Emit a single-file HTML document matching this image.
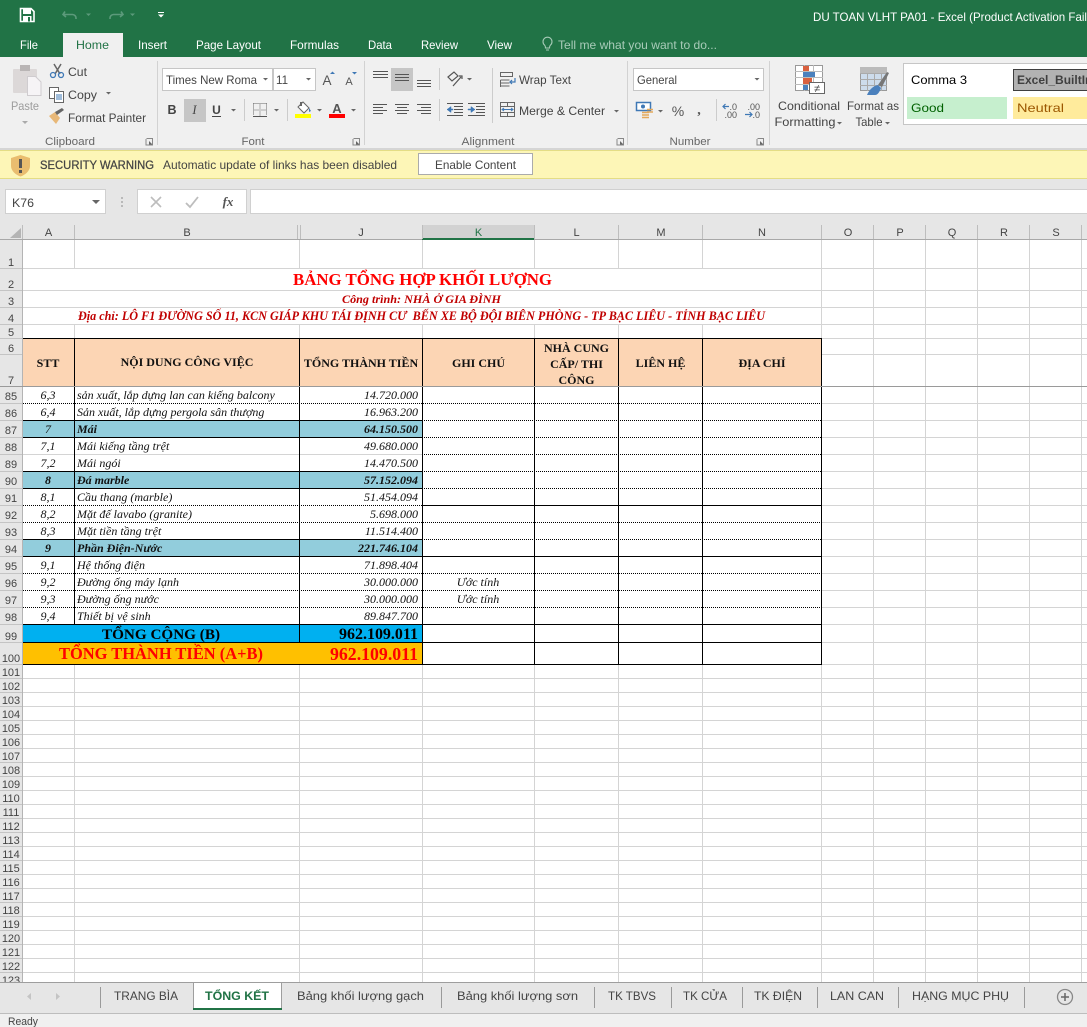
<!DOCTYPE html>
<html><head><meta charset="utf-8"><title>DU TOAN VLHT PA01 - Excel</title>
<style>
html,body{margin:0;padding:0;background:#fff;overflow:hidden}
svg{display:block;position:absolute;left:0;top:0}
text{font-family:"Liberation Sans",sans-serif;white-space:pre}
.u{font-size:12px;fill:#444}
.w{font-size:12px;fill:#fff}
.t{font-size:12px;fill:#fff}
.g{font-size:11px;fill:#666}
.rh{font-size:11px;fill:#444;text-anchor:middle}
.ch{font-size:11px;fill:#444;text-anchor:middle}
.s{font-family:"Liberation Serif",serif;font-size:12px;fill:#111}
.i{font-style:italic}
.b{font-weight:bold}
.c{text-anchor:middle}
.r{text-anchor:end}
.ln{stroke:#d4d4d4;fill:none}
.k{stroke:#000;fill:none}
.d{stroke:#000;fill:none;stroke-dasharray:1 1}
.ic{stroke:#555;fill:none}
.car{fill:#666}
</style></head><body>
<svg width="1087" height="1027" viewBox="0 0 1087 1027" shape-rendering="geometricPrecision">
<!-- backgrounds -->
<rect width="1087" height="1027" fill="#fff"/>
<rect width="1087" height="57" fill="#217346"/>
<rect y="57" width="1087" height="91" fill="#f0f0f0"/>
<rect y="148" width="1087" height="2" fill="#d5d5d5"/>
<rect y="150" width="1087" height="29" fill="#fdf6b7"/>
<rect y="150" width="1087" height="1" fill="#e4dd85"/>
<rect y="178" width="1087" height="1" fill="#e4dd85"/>
<rect y="179" width="1087" height="61" fill="#e6e6e6"/>

<!-- title bar -->
<g>
<path d="M20.500 8.500H31l3 3V21.500H20.500Z" fill="none" stroke="#fff" stroke-width="1.600"/>
<rect x="23" y="9" width="8" height="5" fill="#fff"/><rect x="23" y="16" width="8.500" height="5.500" fill="#fff"/><rect x="28" y="17" width="2" height="4.500" fill="#217346"/>
<path d="M65 11.500L63 14.500L66 17M63.500 14.500H72.500a3.500 3.500 0 0 1 3.500 3.500v1" fill="none" stroke="#5c9a7b" stroke-width="1.600"/>
<path d="M86 13.500h5l-2.500 2.500z" fill="#5c9a7b"/>
<path d="M121 11.500L123 14.500L120 17M122.500 14.500H113.500a3.500 3.500 0 0 0 -3.500 3.500v1" fill="none" stroke="#5c9a7b" stroke-width="1.600"/>
<path d="M130 13.500h5l-2.500 2.500z" fill="#5c9a7b"/>
<path d="M158 12h6v1h-6zM158 14.500h6l-3 3z" fill="#fff"/>
<text x="813" y="21" class="t" textLength="274" lengthAdjust="spacingAndGlyphs">DU TOAN VLHT PA01 - Excel (Product Activation Fail</text>
</g>
<!-- tabs -->
<rect x="63" y="33" width="60" height="24" fill="#f0f0f0"/>
<text x="20" y="49" class="w" textLength="18" lengthAdjust="spacingAndGlyphs">File</text>
<text x="76" y="49" class="u" style="fill:#217346" textLength="33" lengthAdjust="spacingAndGlyphs">Home</text>
<text x="138" y="49" class="w" textLength="29" lengthAdjust="spacingAndGlyphs">Insert</text>
<text x="196" y="49" class="w" textLength="65" lengthAdjust="spacingAndGlyphs">Page Layout</text>
<text x="290" y="49" class="w" textLength="49" lengthAdjust="spacingAndGlyphs">Formulas</text>
<text x="368" y="49" class="w" textLength="24" lengthAdjust="spacingAndGlyphs">Data</text>
<text x="421" y="49" class="w" textLength="37" lengthAdjust="spacingAndGlyphs">Review</text>
<text x="487" y="49" class="w" textLength="25" lengthAdjust="spacingAndGlyphs">View</text>
<path d="M544.500 45a4.500 4.500 0 1 1 6 0c-1 1-1 2-1 3h-4c0-1 0-2-1-3zM546 50h3" fill="none" stroke="#a8cbb8" stroke-width="1.100"/>
<text x="558" y="49" class="w" style="fill:#a8cbb8" textLength="159" lengthAdjust="spacingAndGlyphs">Tell me what you want to do...</text>

<!-- group separators -->
<g fill="#d2d2d2"><rect x="157" y="61" width="1" height="84"/><rect x="364" y="61" width="1" height="84"/><rect x="627" y="61" width="1" height="84"/><rect x="769" y="61" width="1" height="84"/></g>

<!-- clipboard -->
<g>
<rect x="13" y="69" width="24" height="24" rx="1" fill="#dcd8d8"/>
<rect x="20" y="65" width="10" height="6" fill="#b9b5b5"/>
<path d="M27.500 76.500h8l5.500 5.500v13.500h-13.500z" fill="#f6f4f6" stroke="#cfcccf"/>
<text x="25" y="110" class="c" style="font-size:12px;fill:#9c9c9c" textLength="28" lengthAdjust="spacingAndGlyphs">Paste</text>
<path d="M22 121h6l-3 3z" fill="#aaa"/>
<path d="M54 64l6 10M61 64l-6 10" stroke="#666" stroke-width="1.500" fill="none"/>
<circle cx="53" cy="75" r="2.500" fill="none" stroke="#3f78b5" stroke-width="1.300"/><circle cx="61" cy="75" r="2.500" fill="none" stroke="#3f78b5" stroke-width="1.300"/>
<text x="68" y="76" class="u" textLength="19" lengthAdjust="spacingAndGlyphs">Cut</text>
<rect x="49.500" y="87.500" width="9" height="11" fill="#fff" stroke="#666"/>
<rect x="54.500" y="91.500" width="9" height="11" fill="#fff" stroke="#666"/>
<path d="M56 95h6M56 97h6M56 99h6" stroke="#3f78b5"/>
<text x="68" y="99" class="u" textLength="29" lengthAdjust="spacingAndGlyphs">Copy</text>
<path d="M106 92h5l-2.500 2.500z" class="car"/>
<path d="M49 116l6-4 5 6-4 6z" fill="#e8b878"/>
<path d="M55 112l2 3 7-5-2-2z" fill="#666"/>
<text x="68" y="122" class="u" textLength="78" lengthAdjust="spacingAndGlyphs">Format Painter</text>
<text x="70" y="145" class="g c" textLength="50" lengthAdjust="spacingAndGlyphs">Clipboard</text>
<path d="M146.500 138.500h6v6M146 139v6h7" fill="none" stroke="#888"/><path d="M149 141l3.500 3.500h-3.500z" fill="#666"/>
</g>

<!-- font -->
<g>
<rect x="162.500" y="68.500" width="110" height="22" fill="#fff" stroke="#c6c6c6"/>
<rect x="273.500" y="68.500" width="42" height="22" fill="#fff" stroke="#c6c6c6"/>
<text x="166" y="84" class="u" textLength="91" lengthAdjust="spacingAndGlyphs">Times New Roma</text>
<path d="M263 78h5l-2.500 2.500z" class="car"/>
<text x="276" y="84" class="u" textLength="12" lengthAdjust="spacingAndGlyphs">11</text>
<path d="M306 78h5l-2.500 2.500z" class="car"/>
<text x="327" y="85" class="c" style="font-size:13.500px;fill:#555">A</text>
<path d="M330 74h5l-2.500-2.500z" fill="#3f78b5"/>
<text x="349" y="85" class="c" style="font-size:11px;fill:#555">A</text>
<path d="M352 72h5l-2.500 2.500z" fill="#3f78b5"/>
<rect x="184" y="99" width="22" height="23" fill="#c6c6c6"/>
<text x="172" y="114" class="c b" style="font-size:12.500px;fill:#444">B</text>
<text x="194.500" y="114" class="c i" style="font-size:12.500px;fill:#444;font-family:'Liberation Serif',serif">I</text>
<text x="216.500" y="114" class="c b" style="font-size:12px;fill:#444">U</text>
<rect x="212" y="116" width="9" height="1" fill="#444"/>
<path d="M231 109h5l-2.500 2.500z" class="car"/>
<rect x="244" y="99" width="1" height="22" fill="#ccc"/>
<path d="M253.500 103.500h13M253.500 110h13M260 103.500v12.500M253.500 103.500v12M266.500 103.500v12" fill="none" stroke="#666" stroke-dasharray="1 1"/>
<rect x="253" y="116" width="14" height="1" fill="#555"/>
<path d="M274 109h5l-2.500 2.500z" class="car"/>
<rect x="287" y="99" width="1" height="22" fill="#ccc"/>
<path d="M298 107l5-5 6 6-5 5z" fill="#fff" stroke="#666"/><path d="M309 108l2 3-2 1z" fill="#3f78b5"/><path d="M300 102h2v4h-2z" fill="#666"/>
<rect x="295" y="114" width="16" height="4" fill="#ffff00"/>
<path d="M317 109h5l-2.500 2.500z" class="car"/>
<text x="337" y="113" class="c b" style="font-size:13px;fill:#555">A</text>
<rect x="329" y="114" width="16" height="4" fill="#f00"/>
<path d="M351 109h5l-2.500 2.500z" class="car"/>
<text x="253" y="145" class="g c" textLength="23" lengthAdjust="spacingAndGlyphs">Font</text>
<path d="M353.500 138.500h6v6M353 139v6h7" fill="none" stroke="#888"/><path d="M356 141l3.500 3.500h-3.500z" fill="#666"/>
</g>

<!-- alignment -->
<g>
<rect x="391" y="68" width="22" height="23" fill="#c6c6c6"/>
<path d="M373 71.500h15M373 74.500h15M373 77.500h15M395 74.500h14M395 77.500h14M395 80.500h14M417 80.500h14M417 83.500h14M417 86.500h14" class="ic"/>
<rect x="439" y="68" width="1" height="22" fill="#ccc"/>
<path d="M448 77l6-5 4 4-6 5zM453 86l8-9M459 76l3 0 0 3" fill="none" stroke="#555" stroke-width="1.200"/>
<path d="M467 78h5l-2.500 2.500z" class="car"/>
<rect x="492" y="68" width="1" height="55" fill="#ccc"/>
<path d="M500.500 72.500h12v4h-12zM500.500 80h9M500.500 83h9M500.500 86h9M500.500 80v7" fill="none" stroke="#666"/>
<path d="M515 78v4h-5M512 80l-2 2 2 2" fill="none" stroke="#3f78b5" stroke-width="1.200"/>
<text x="519" y="84" class="u" textLength="52" lengthAdjust="spacingAndGlyphs">Wrap Text</text>
<path d="M373 104.500h14M373 107.500h10M373 110.500h14M373 113.500h10M395 104.500h14M397 107.500h10M395 110.500h14M397 113.500h10M417 104.500h14M421 107.500h10M417 110.500h14M421 113.500h10" class="ic"/>
<rect x="439" y="99" width="1" height="22" fill="#ccc"/>
<path d="M447 103.500h16M454 106.500h9M454 109.500h9M454 112.500h9M447 115.500h16M468 103.500h17M476 106.500h9M476 109.500h9M476 112.500h9M468 115.500h17" class="ic"/>
<path d="M447 109.500l4-3v6zM451 109h2v1h-2zM475 109.500l-4-3v6zM468 109h3v1h-3z" fill="#3f78b5" stroke="#3f78b5" stroke-width=".5"/>
<path d="M500.500 102.500h14v14h-14zM500.500 106.500h14M500.500 112.500h14M507.500 102.500v4M507.500 112.500v4" fill="none" stroke="#666"/>
<path d="M503 109.500h9M504 108l-2 1.500 2 1.500M511 108l2 1.500-2 1.500" fill="none" stroke="#3f78b5"/>
<text x="519" y="115" class="u" textLength="86" lengthAdjust="spacingAndGlyphs">Merge &amp; Center</text>
<path d="M614 110h5l-2.500 2.500z" class="car"/>
<text x="488" y="145" class="g c" textLength="53" lengthAdjust="spacingAndGlyphs">Alignment</text>
<path d="M617.500 138.500h6v6M617 139v6h7" fill="none" stroke="#888"/><path d="M620 141l3.500 3.500h-3.500z" fill="#666"/>
</g>

<!-- number -->
<g>
<rect x="633.500" y="68.500" width="130" height="22" fill="#fff" stroke="#c6c6c6"/>
<text x="637" y="84" class="u" textLength="40" lengthAdjust="spacingAndGlyphs">General</text>
<path d="M754.500 78h5l-2.500 2.500z" class="car"/>
<rect x="636.500" y="102.500" width="14" height="8" fill="#fff" stroke="#3f78b5" stroke-width="1.500"/>
<circle cx="643" cy="106.500" r="2" fill="#3f78b5"/>
<path d="M642 112.500h7M642 115h7M642 117.500h7M647 109.500h6M647 112h6" stroke="#e4a95c" stroke-width="1.500" fill="none"/>
<path d="M658 110h5l-2.500 2.500z" class="car"/>
<text x="678" y="116" class="c" style="font-size:14px;fill:#555">%</text>
<text x="699" y="114" class="c b" style="font-size:14px;fill:#555;font-family:'Liberation Serif',serif">,</text>
<rect x="716" y="99" width="1" height="22" fill="#ccc"/>
<text x="737" y="110" class="r" style="font-size:9px;fill:#555">.0</text>
<text x="737" y="118" class="r" style="font-size:9px;fill:#555">.00</text>
<path d="M723 106.500h6M725.500 104l-2.500 2.500 2.500 2.500" fill="none" stroke="#3f78b5" stroke-width="1.200"/>
<text x="760" y="110" class="r" style="font-size:9px;fill:#555">.00</text>
<text x="760" y="118" class="r" style="font-size:9px;fill:#555">.0</text>
<path d="M745 114.500h7M749.500 112l2.500 2.500-2.500 2.500" fill="none" stroke="#3f78b5" stroke-width="1.200"/>
<text x="690" y="145" class="g c" textLength="41" lengthAdjust="spacingAndGlyphs">Number</text>
<path d="M757.500 138.500h6v6M757 139v6h7" fill="none" stroke="#888"/><path d="M760 141l3.500 3.500h-3.500z" fill="#666"/>
</g>

<!-- styles -->
<g>
<rect x="795.500" y="65.500" width="27" height="25" fill="#fff" stroke="#999"/>
<path d="M795 71.500h28M795 77.500h28M795 84.500h28M804.500 65v26M813.500 65v26" stroke="#bbb" fill="none"/>
<rect x="803" y="66" width="6" height="5" fill="#d9603f"/><rect x="803" y="72" width="12" height="5" fill="#4a80bd"/><rect x="803" y="78" width="9" height="6" fill="#d9603f"/><rect x="803" y="85" width="5" height="5" fill="#4a80bd"/>
<rect x="809.500" y="82.500" width="15" height="11" fill="#fff" stroke="#666"/>
<text x="817" y="92" class="c" style="font-size:11px;fill:#444">≠</text>
<text x="809" y="110" class="u c" textLength="62" lengthAdjust="spacingAndGlyphs">Conditional</text>
<text x="805" y="126" class="u c" textLength="61" lengthAdjust="spacingAndGlyphs">Formatting</text>
<path d="M837 122h5l-2.500 2.500z" class="car"/>
<rect x="860.500" y="67.500" width="26" height="23" fill="#cddcec" stroke="#999"/>
<path d="M860 73.500h27M860 79.500h27M860 85.500h27M867.500 67v24M874.500 67v24M881.500 67v24" stroke="#aaa" fill="none"/>
<rect x="860" y="67" width="27" height="6" fill="#bbb"/>
<path d="M878 85l9-13 2 1-7 14z" fill="#777"/>
<path d="M867 95c2-5 6-9 11-10l3 3c-1 3-3 7-6 7z" fill="#4a80bd"/>
<text x="873" y="110" class="u c" textLength="52" lengthAdjust="spacingAndGlyphs">Format as</text>
<text x="869" y="126" class="u c" textLength="27" lengthAdjust="spacingAndGlyphs">Table</text>
<path d="M885 122h5l-2.500 2.500z" class="car"/>
<rect x="903.500" y="63.500" width="190" height="61" fill="#fff" stroke="#c6c6c6"/>
<text x="911" y="84" class="u" style="fill:#000" textLength="56" lengthAdjust="spacingAndGlyphs">Comma 3</text>
<rect x="1013.500" y="69.500" width="80" height="21" fill="#b2b2b2" stroke="#3f3f3f"/>
<text x="1017" y="84" class="b" style="font-size:12px;fill:#3f3f3f">Excel_BuiltIn</text>
<rect x="907" y="97" width="100" height="22" fill="#c6efce"/>
<text x="911" y="112" class="u" style="fill:#006100" textLength="33" lengthAdjust="spacingAndGlyphs">Good</text>
<rect x="1013" y="97" width="74" height="22" fill="#ffeb9c"/>
<text x="1017" y="112" class="u" style="fill:#9c5700" textLength="47" lengthAdjust="spacingAndGlyphs">Neutral</text>
</g>

<!-- security bar -->
<path d="M11 158l9.500-3 9.500 3v8c0 5-5 9-9.500 10.500C16 175 11 171 11 166z" fill="#e9bd6f"/>
<rect x="19" y="159" width="3" height="9" fill="#555"/><rect x="19" y="170" width="3" height="3" fill="#555"/>
<text x="40" y="169" class="u" style="font-weight:normal;fill:#444;stroke:#444;stroke-width:.25" textLength="114" lengthAdjust="spacingAndGlyphs">SECURITY WARNING</text>
<text x="163" y="169" class="u" textLength="234" lengthAdjust="spacingAndGlyphs">Automatic update of links has been disabled</text>
<rect x="418.500" y="153.500" width="114" height="21" fill="#fff" stroke="#ababab"/>
<text x="475.500" y="169" class="u c" textLength="81" lengthAdjust="spacingAndGlyphs">Enable Content</text>

<!-- formula bar -->
<rect x="5.500" y="189.500" width="100" height="24" fill="#fff" stroke="#d0d0d0"/>
<text x="12" y="207" class="u" textLength="22" lengthAdjust="spacingAndGlyphs">K76</text>
<path d="M92 200h8l-4 4z" fill="#666"/>
<path d="M122 197v2M122 201v2M122 205v2" stroke="#aaa" stroke-width="1.500"/>
<rect x="137.500" y="189.500" width="109" height="24" fill="#fff" stroke="#d0d0d0"/>
<path d="M151 197l10 10M161 197l-10 10" stroke="#bdbdbd" stroke-width="1.600"/>
<path d="M186 203l4 4 8-10" stroke="#bdbdbd" stroke-width="1.800" fill="none"/>
<text x="228" y="206" class="c i b" style="font-family:'Liberation Serif',serif;font-size:13px;fill:#555">fx</text>
<rect x="250.500" y="189.500" width="840" height="24" fill="#fff" stroke="#d0d0d0"/>

<!-- column headers -->
<rect x="422" y="225" width="112" height="14" fill="#d2d2d2"/>
<rect y="239" width="1087" height="1" fill="#a8a8a8"/>
<rect x="422" y="238" width="112" height="2" fill="#217346"/>
<path d="M21 228v10H10z" fill="#b4b4b4"/>
<path d="M22.500 225v14M74.500 225v14M297.500 225v14M300.500 225v14M422.500 225v14M534.500 225v14M618.500 225v14M702.500 225v14M821.500 225v14M873.500 225v14M925.500 225v14M977.500 225v14M1029.500 225v14M1081.500 225v14" stroke="#bdbdbd" fill="none"/>
<text x="48.500" y="236" class="ch">A</text><text x="187" y="236" class="ch">B</text><text x="361" y="236" class="ch">J</text><text x="478.500" y="236" class="ch" style="fill:#217346">K</text><text x="576.500" y="236" class="ch">L</text><text x="661" y="236" class="ch">M</text><text x="762" y="236" class="ch">N</text><text x="848" y="236" class="ch">O</text><text x="900" y="236" class="ch">P</text><text x="952" y="236" class="ch">Q</text><text x="1004" y="236" class="ch">R</text><text x="1056" y="236" class="ch">S</text>

<!-- grid lines -->
<path class="ln" d="M22 268.500H1087M22 290.500H1087M22 307.500H1087M22 324.500H1087M22 338.500H1087M821 354.500H1087M821 403.500H1087M821 420.500H1087M821 437.500H1087M821 454.500H1087M821 471.500H1087M821 488.500H1087M821 505.500H1087M821 522.500H1087M821 539.500H1087M821 556.500H1087M821 573.500H1087M821 590.500H1087M821 607.500H1087M821 624.500H1087M821 642.500H1087M22 664.500H1087M22 678.500H1087M22 692.500H1087M22 706.500H1087M22 720.500H1087M22 734.500H1087M22 748.500H1087M22 762.500H1087M22 776.500H1087M22 790.500H1087M22 804.500H1087M22 818.500H1087M22 832.500H1087M22 846.500H1087M22 860.500H1087M22 874.500H1087M22 888.500H1087M22 902.500H1087M22 916.500H1087M22 930.500H1087M22 944.500H1087M22 958.500H1087M22 972.500H1087"/>
<path class="ln" d="M74.500 240V268M299.500 240V268M422.500 240V268M534.500 240V268M618.500 240V268M702.500 240V268M74.500 324V338M299.500 324V338M422.500 324V338M534.500 324V338M618.500 324V338M702.500 324V338M74.500 664V982M299.500 664V982M422.500 664V982M534.500 664V982M618.500 664V982M702.500 664V982M821.500 240V982M873.500 240V982M925.500 240V982M977.500 240V982M1029.500 240V982M1081.500 240V982"/>

<!-- row headers -->
<rect x="0" y="240" width="22" height="742" fill="#e6e6e6"/>
<rect x="22" y="240" width="1" height="742" fill="#b4b4b4"/>
<path d="M0 268.500H22M0 290.500H22M0 307.500H22M0 324.500H22M0 338.500H22M0 354.500H22M0 403.500H22M0 420.500H22M0 437.500H22M0 454.500H22M0 471.500H22M0 488.500H22M0 505.500H22M0 522.500H22M0 539.500H22M0 556.500H22M0 573.500H22M0 590.500H22M0 607.500H22M0 624.500H22M0 642.500H22M0 664.500H22M0 678.500H22M0 692.500H22M0 706.500H22M0 720.500H22M0 734.500H22M0 748.500H22M0 762.500H22M0 776.500H22M0 790.500H22M0 804.500H22M0 818.500H22M0 832.500H22M0 846.500H22M0 860.500H22M0 874.500H22M0 888.500H22M0 902.500H22M0 916.500H22M0 930.500H22M0 944.500H22M0 958.500H22M0 972.500H22" stroke="#c4c4c4" fill="none"/>
<g>
<text x="11" y="266" class="rh">1</text><text x="11" y="288" class="rh">2</text><text x="11" y="305" class="rh">3</text><text x="11" y="322" class="rh">4</text><text x="11" y="336" class="rh">5</text><text x="11" y="352" class="rh">6</text><text x="11" y="384" class="rh">7</text>
<text x="11" y="400" class="rh">85</text><text x="11" y="417" class="rh">86</text><text x="11" y="434" class="rh">87</text><text x="11" y="451" class="rh">88</text><text x="11" y="468" class="rh">89</text><text x="11" y="485" class="rh">90</text><text x="11" y="502" class="rh">91</text><text x="11" y="519" class="rh">92</text><text x="11" y="536" class="rh">93</text><text x="11" y="553" class="rh">94</text><text x="11" y="570" class="rh">95</text><text x="11" y="587" class="rh">96</text><text x="11" y="604" class="rh">97</text><text x="11" y="621" class="rh">98</text><text x="11" y="640" class="rh">99</text><text x="11" y="662" class="rh">100</text>
<text x="11" y="676" class="rh">101</text><text x="11" y="690" class="rh">102</text><text x="11" y="704" class="rh">103</text><text x="11" y="718" class="rh">104</text><text x="11" y="732" class="rh">105</text><text x="11" y="746" class="rh">106</text><text x="11" y="760" class="rh">107</text><text x="11" y="774" class="rh">108</text><text x="11" y="788" class="rh">109</text><text x="11" y="802" class="rh">110</text><text x="11" y="816" class="rh">111</text><text x="11" y="830" class="rh">112</text><text x="11" y="844" class="rh">113</text><text x="11" y="858" class="rh">114</text><text x="11" y="872" class="rh">115</text><text x="11" y="886" class="rh">116</text><text x="11" y="900" class="rh">117</text><text x="11" y="914" class="rh">118</text><text x="11" y="928" class="rh">119</text><text x="11" y="942" class="rh">120</text><text x="11" y="956" class="rh">121</text><text x="11" y="970" class="rh">122</text><text x="11" y="984" class="rh">123</text>
</g>

<!-- titles -->
<text x="422.500" y="285" class="s b c" style="font-size:16.800px;fill:#f00" textLength="259" lengthAdjust="spacingAndGlyphs">BẢNG TỔNG HỢP KHỐI LƯỢNG</text>
<text x="421.500" y="303" class="s b i c" style="font-size:12px;fill:#c00000" textLength="159" lengthAdjust="spacingAndGlyphs">Công trình: NHÀ Ở GIA ĐÌNH</text>
<text x="421.500" y="320" class="s b i c" style="font-size:12.500px;fill:#c00000" textLength="687" lengthAdjust="spacingAndGlyphs">Địa chỉ: LÔ F1 ĐƯỜNG SỐ 11, KCN GIÁP KHU TÁI ĐỊNH CƯ  BẾN XE BỘ ĐỘI BIÊN PHÒNG - TP BẠC LIÊU - TỈNH BẠC LIÊU</text>

<!-- table fills -->
<rect x="23" y="339" width="798" height="47" fill="#fcd5b4"/>
<rect x="23" y="420" width="399" height="17" fill="#92cddc"/>
<rect x="23" y="471" width="399" height="17" fill="#92cddc"/>
<rect x="23" y="539" width="399" height="17" fill="#92cddc"/>
<rect x="23" y="624" width="399" height="18" fill="#00b0f0"/>
<rect x="23" y="642" width="399" height="22" fill="#ffc000"/>

<!-- table borders -->
<path class="ln" d="M23 454.500H422"/>
<path class="d" d="M23 403.500H821M422 420.500H821M422 437.500H821M23 505.500H821M23 522.500H821M422 471.500H821M422 488.500H821M422 539.500H821M23 573.500H821M23 590.500H821M23 607.500H821M422 454.500H821M422 505.500H821"/>
<path class="k" d="M23 338.500H822M23 420.500H422M23 437.500H422M23 471.500H422M23 488.500H422M23 539.500H422M23 556.500H821M23 624.500H821M23 642.500H821M23 664.500H822M74.500 338V624M299.500 338V642M422.500 338V665M534.500 338V665M618.500 338V665M702.500 338V665M821.500 338V665"/>
<rect x="0" y="386" width="1087" height="1" fill="#9a9a9a"/>

<!-- table header text -->
<g class="hdr">
<text x="48" y="367" class="s b c">STT</text>
<text x="187" y="366" class="s b c">NỘI DUNG CÔNG VIỆC</text>
<text x="361" y="367" class="s b c">TỔNG THÀNH TIỀN</text>
<text x="478.500" y="367" class="s b c">GHI CHÚ</text>
<text x="576.500" y="352" class="s b c">NHÀ CUNG</text>
<text x="576.500" y="368" class="s b c">CẤP/ THI</text>
<text x="576.500" y="384" class="s b c">CÔNG</text>
<text x="660.500" y="367" class="s b c">LIÊN HỆ</text>
<text x="762" y="367" class="s b c">ĐỊA CHỈ</text>
</g>

<!-- data -->
<g>
<text x="48" y="399" class="s i c">6,3</text><text x="77" y="399" class="s i">sản xuất, lắp dựng lan can kiếng balcony</text><text x="418" y="399" class="s i r">14.720.000</text>
<text x="48" y="416" class="s i c">6,4</text><text x="77" y="416" class="s i">Sản xuất, lắp dựng pergola sân thượng</text><text x="418" y="416" class="s i r">16.963.200</text>
<text x="48" y="433" class="s i c">7</text><text x="77" y="433" class="s i b">Mái</text><text x="418" y="433" class="s i b r">64.150.500</text>
<text x="48" y="450" class="s i c">7,1</text><text x="77" y="450" class="s i">Mái kiếng tầng trệt</text><text x="418" y="450" class="s i r">49.680.000</text>
<text x="48" y="467" class="s i c">7,2</text><text x="77" y="467" class="s i">Mái ngói</text><text x="418" y="467" class="s i r">14.470.500</text>
<text x="48" y="484" class="s i b c">8</text><text x="77" y="484" class="s i b">Đá marble</text><text x="418" y="484" class="s i b r">57.152.094</text>
<text x="48" y="501" class="s i c">8,1</text><text x="77" y="501" class="s i">Cầu thang (marble)</text><text x="418" y="501" class="s i r">51.454.094</text>
<text x="48" y="518" class="s i c">8,2</text><text x="77" y="518" class="s i">Mặt đế lavabo (granite)</text><text x="418" y="518" class="s i r">5.698.000</text>
<text x="48" y="535" class="s i c">8,3</text><text x="77" y="535" class="s i">Mặt tiền tầng trệt</text><text x="418" y="535" class="s i r">11.514.400</text>
<text x="48" y="552" class="s i b c">9</text><text x="77" y="552" class="s i b">Phần Điện-Nước</text><text x="418" y="552" class="s i b r">221.746.104</text>
<text x="48" y="569" class="s i c">9,1</text><text x="77" y="569" class="s i">Hệ thống điện</text><text x="418" y="569" class="s i r">71.898.404</text>
<text x="48" y="586" class="s i c">9,2</text><text x="77" y="586" class="s i">Đường ống máy lạnh</text><text x="418" y="586" class="s i r">30.000.000</text><text x="478" y="586" class="s i c">Ước tính</text>
<text x="48" y="603" class="s i c">9,3</text><text x="77" y="603" class="s i">Đường ống nước</text><text x="418" y="603" class="s i r">30.000.000</text><text x="478" y="603" class="s i c">Ước tính</text>
<text x="48" y="620" class="s i c">9,4</text><text x="77" y="620" class="s i">Thiết bị vệ sinh</text><text x="418" y="620" class="s i r">89.847.700</text>
<text x="161" y="639" class="s b c" style="font-size:15px;fill:#000" textLength="118" lengthAdjust="spacingAndGlyphs">TỔNG CỘNG (B)</text><text x="418" y="639" class="s b r" style="font-size:16px;fill:#000" textLength="79" lengthAdjust="spacingAndGlyphs">962.109.011</text>
<text x="161" y="659" class="s b c" style="font-size:16.500px;fill:#f00" textLength="204" lengthAdjust="spacingAndGlyphs">TỔNG THÀNH TIỀN (A+B)</text><text x="418" y="660" class="s b r" style="font-size:17.500px;fill:#f00" textLength="88" lengthAdjust="spacingAndGlyphs">962.109.011</text>
</g>

<!-- sheet tabs -->
<rect y="982" width="1087" height="31" fill="#e6e6e6"/>
<rect y="982" width="1087" height="1" fill="#9e9e9e"/>
<rect y="1013" width="1087" height="14" fill="#f0f0f0"/>
<rect y="1013" width="1087" height="1" fill="#bdbdbd"/>
<path d="M31 993l-4 3.500 4 3.500zM56 993l4 3.500-4 3.500z" fill="#c4c4c4"/>
<g fill="#9a9a9a"><rect x="100" y="987" width="1" height="21"/><rect x="441" y="987" width="1" height="21"/><rect x="594" y="987" width="1" height="21"/><rect x="671" y="987" width="1" height="21"/><rect x="742" y="987" width="1" height="21"/><rect x="817" y="987" width="1" height="21"/><rect x="898" y="987" width="1" height="21"/><rect x="1024" y="987" width="1" height="21"/></g>
<rect x="193" y="982" width="89" height="28" fill="#fff"/>
<path d="M193.500 1009V982.500H281.500V1009" fill="none" stroke="#9e9e9e"/>
<rect x="193" y="1008" width="89" height="2" fill="#217346"/>
<text x="114" y="1000" class="u" textLength="64" lengthAdjust="spacingAndGlyphs">TRANG BÌA</text>
<text x="205" y="1000" class="u b" style="fill:#217346" textLength="64" lengthAdjust="spacingAndGlyphs">TỔNG KẾT</text>
<text x="297" y="1000" class="u" textLength="127" lengthAdjust="spacingAndGlyphs">Bảng khối lượng gạch</text>
<text x="457" y="1000" class="u" textLength="121" lengthAdjust="spacingAndGlyphs">Bảng khối lượng sơn</text>
<text x="608" y="1000" class="u" textLength="48" lengthAdjust="spacingAndGlyphs">TK TBVS</text>
<text x="683" y="1000" class="u" textLength="44" lengthAdjust="spacingAndGlyphs">TK CỬA</text>
<text x="754" y="1000" class="u" textLength="48" lengthAdjust="spacingAndGlyphs">TK ĐIỆN</text>
<text x="830" y="1000" class="u" textLength="54" lengthAdjust="spacingAndGlyphs">LAN CAN</text>
<text x="912" y="1000" class="u" textLength="97" lengthAdjust="spacingAndGlyphs">HẠNG MỤC PHỤ</text>
<circle cx="1065" cy="997" r="7.500" fill="none" stroke="#888" stroke-width="1.300"/>
<path d="M1061 997h8M1065 993v8" stroke="#666" stroke-width="1.500"/>
<text x="8" y="1025" class="u" style="font-size:11px" textLength="30" lengthAdjust="spacingAndGlyphs">Ready</text>
</svg>
</body></html>
